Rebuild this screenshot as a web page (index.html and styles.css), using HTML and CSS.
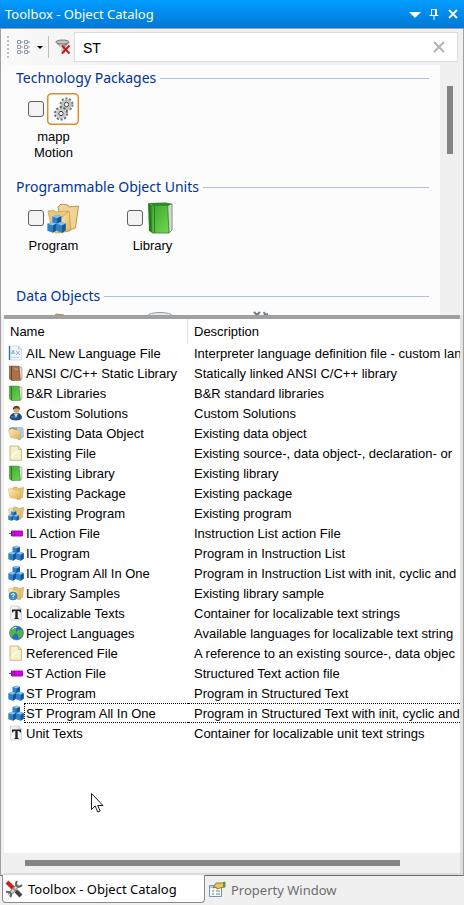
FILE: index.html
```html
<!DOCTYPE html>
<html lang="en">
<head>
<meta charset="utf-8">
<title>Toolbox - Object Catalog</title>
<link rel="stylesheet" href="styles.css">
</head>
<body>
<svg class="defs" aria-hidden="true">
  <defs>
    <linearGradient id="gFolder" x1="0" y1="0" x2="1" y2="1"><stop offset="0" stop-color="#fff0b8"/><stop offset="1" stop-color="#dcae55"/></linearGradient>
    <linearGradient id="gGreen" x1="0" y1="0" x2="1" y2="1"><stop offset="0" stop-color="#3fa52e"/><stop offset="1" stop-color="#6fd850"/></linearGradient>
    <linearGradient id="gFunnel" x1="0" y1="0" x2="1" y2="0"><stop offset="0" stop-color="#444"/><stop offset=".4" stop-color="#ddd"/><stop offset="1" stop-color="#555"/></linearGradient>
    <symbol id="cubes" viewBox="0 0 16 16">
      <path d="M4.500 2L9 .7l3 1.200v5.600L8.500 9l-4-1.300z" fill="#2f80c8"/><path d="M4.500 2L9 .7l3 1.200-3.500 1.600z" fill="#83c2f0"/><path d="M8.500 3.500L12 1.900v5.600L8.500 9z" fill="#17569a"/>
      <path d="M.3 8.200L4 6.700l4 1.200v5.800l-3 2-4.700-1.500z" fill="#2f80c8"/><path d="M.3 8.200L4 6.700l4 1.200-3 1.800z" fill="#83c2f0"/><path d="M5 9.700l3-1.800v5.800l-3 2z" fill="#17569a"/>
      <path d="M8 8.200l3.700-1.500 4 1.200v5.800l-3 2L8 14.200z" fill="#2f80c8"/><path d="M8 8.200l3.700-1.500 4 1.200-3 1.800z" fill="#83c2f0"/><path d="M12.700 9.700l3-1.800v5.800l-3 2z" fill="#17569a"/>
    </symbol>
    <symbol id="folder" viewBox="0 0 16 16">
      <path d="M5 4l1-2 3.500.5 1 1 5-1-1 10-5 2z" fill="#e8c679" stroke="#b98a3a" stroke-width=".5"/>
      <path d="M.5 4L4 3l1 1.500 7.500 1v9L2 12.500z" fill="url(#gFolder)" stroke="#d0a85c" stroke-width=".5"/>
    </symbol>
    <symbol id="folderprog" viewBox="0 0 16 16"><use href="#folder"/><use href="#cubes" x="0" y="5" width="11" height="11"/></symbol>
    <symbol id="samples" viewBox="0 0 16 16"><use href="#folder"/><circle cx="5" cy="11" r="4" fill="#3c8ed2" stroke="#20639f" stroke-width=".6"/><path d="M3.600 10q0-1.500 1.400-1.500t1.400 1.300Q6.400 10.600 5 11.200v.8M5 12.800v1" fill="none" stroke="#fff" stroke-width="1"/></symbol>
    <symbol id="dataobj" viewBox="0 0 16 16"><path d="M1 3q4-2 8 0v3H1z" fill="#8d9aa5"/><path d="M8 2l7 1 .5 9-5 3z" fill="#a9cdf0" stroke="#7f9ab5" stroke-width=".5"/><path d="M.5 5l4-1.500 1 1 7 1v9L2.500 12.500z" fill="url(#gFolder)" stroke="#d0a85c" stroke-width=".5"/></symbol>
    <symbol id="book" viewBox="0 0 16 16"><path d="M11 1.500l3 1v11.500l-2 1.500z" fill="#e7e7e7" stroke="#777" stroke-width=".5"/><path d="M1.500 1l9.500.3 1.200 14L4 15.500l-2.500-1.500z" fill="url(#gGreen)" stroke="#2c8b20" stroke-width=".6"/><path d="M3.500 1.300V15" stroke="#2c7a22"/></symbol>
    <symbol id="brownbook" viewBox="0 0 16 16"><path d="M11 1.500l3 1v11.500l-2 1.500z" fill="#ddd" stroke="#777" stroke-width=".5"/><path d="M1.500 1l9.500.3 1.200 14L4 15.500l-2.500-1.500z" fill="#ae7048" stroke="#754526" stroke-width=".6"/><path d="M3.500 1.300V15" stroke="#704125"/><path d="M6 4l4 .3" stroke="#d5a37e"/></symbol>
    <symbol id="ail" viewBox="0 0 16 16"><path d="M1.500 1h9l3 3v11h-12z" fill="#f0f7fa" stroke="#c9d9e0" stroke-width=".8"/><path d="M1.500 1v14" stroke="#2876ac" stroke-width="1.400"/><path d="M10.500 1v3h3" fill="#d2e6ef" stroke="#a9c3cd" stroke-width=".7"/><path d="M3.500 9l1.500-4 1.500 4M4 8h2M8 6l4 4M11.500 6L8 10" fill="none" stroke="#86a3bd" stroke-width=".9"/><path d="M3 12.500h8" stroke="#c3d6e0"/></symbol>
    <symbol id="person" viewBox="0 0 16 16"><path d="M1.500 13q.5-4 4.500-5h4q4 1 4 5-1 2.500-6 2.500T1.500 13z" fill="#235078"/><path d="M6 8.500l2 4.500 2-4.500z" fill="#cfe2f2"/><path d="M3 12q3-1 5 1" fill="none" stroke="#4f8fc4"/><circle cx="8.500" cy="5" r="3" fill="#dba473"/><path d="M5 5Q4.500.7 9 .8q3.500.3 2.700 4.200Q10.500 3 8.500 3.200T5 5z" fill="#5d4730"/></symbol>
    <symbol id="file" viewBox="0 0 16 16"><path d="M2 1h8.500l3 3.500V15.300H2z" fill="#f7f0c8" stroke="#c4b47f" stroke-width=".9"/><path d="M10.500 1v3.500h3" fill="#e5daa5" stroke="#bca971" stroke-width=".7"/><path d="M4 13q2-7 7-6" fill="none" stroke="#fffbe2" stroke-width="2"/></symbol>
    <symbol id="action" viewBox="0 0 16 16"><path d="M1 8.500h3" stroke="#555"/><path d="M3.500 6h11v5h-11z" fill="#d800e8" stroke="#a010ab" stroke-width="1"/><path d="M6.500 6v5M3.500 6v5" stroke="#76107f"/></symbol>
    <symbol id="textdoc" viewBox="0 0 16 16"><path d="M2.500 1h8l3 3v11h-11z" fill="#f1f2f3" stroke="#cdd0d2" stroke-width=".8"/><path d="M10.500 1v3h3" fill="#ddd" stroke="#bbb" stroke-width=".6"/><path d="M4 4.500h9v3h-.8q-.2-1.600-1.700-1.600h-.8v6.600q0 1 1.300 1v.5H6v-.5q1.300 0 1.300-1V5.900h-.8Q5 5.900 4.800 7.500H4z" fill="#222"/></symbol>
    <symbol id="globe" viewBox="0 0 16 16"><circle cx="8.500" cy="8" r="7" fill="#2a6fbf" stroke="#4d77a0" stroke-width=".6"/><path d="M2.500 5q3-4.500 6.500-3l-1.500 3 1 2-3 3-2 3Q1 9 2.500 5zM10 5l4-.5q2 3 .5 6L11 14l-1-4-2-2z" fill="#55b446"/><path d="M4.500 4q2-2 4-1.500" stroke="#d7f2fb" fill="none"/></symbol>
    <symbol id="bigfolder" viewBox="0 0 32 32"><path d="M11 5l3-3 7 1 1 2 9.500-1-3 22-13 4z" fill="#efd595" stroke="#ad7d35" stroke-width=".8"/><path d="M1 9l5-1 3 2 12-1 2 20-14 2-4-3z" fill="#e9c77d" stroke="#c59a4c" stroke-width=".7"/><path d="M12 18l10-9 2 19-12 3z" fill="url(#gFolder)" stroke="#c59a4c" stroke-width=".8"/></symbol>
  </defs>
</svg>
<div class="window">
  <header class="titlebar">
    <h1>Toolbox - Object Catalog</h1>
    <button type="button" aria-label="Menu"><svg width="12" height="12"><path d="M0 4h12L6 10z" fill="#fff"/></svg></button>
    <button type="button" aria-label="Pin"><svg width="12" height="12"><path d="M3.500 1v6M3 1.500h6M1.500 7.500h9M6 8v4" fill="none" stroke="#fff"/><path d="M7 1h2v6H7z" fill="#fff"/></svg></button>
    <button type="button" aria-label="Close"><svg width="12" height="12"><path d="M2 2l8 8M10 2l-8 8" stroke="#fff" stroke-width="1.800"/></svg></button>
  </header>
  <main class="panel">
    <div class="toolbar">
      <span class="grip"></span>
      <button type="button" class="view" aria-label="View mode"><svg width="28" height="16"><g fill="#f5f7f9" stroke="#8c9dad" stroke-width="1"><path d="M1.500 1.500h3v3h-3zM1.500 6.500h3v3h-3zM1.500 11.500h3v3h-3zM8.500 1.500h3v3h-3zM8.500 6.500h3v3h-3zM8.500 11.500h3v3h-3z"/></g><path d="M5 3h2M5 13h2M12 3h2M12 13h2" stroke="#7193b5"/><path d="M5 8h2M12 8h2" stroke="#e28c83"/><path d="M21 7h6l-3 3z" fill="#000"/></svg></button>
      <span class="divider"></span>
      <button type="button" class="filter" aria-label="Clear filter"><svg width="16" height="16"><path d="M.5 3L6 9v3.500l3.500 2V9l5-6z" fill="url(#gFunnel)"/><ellipse cx="7.500" cy="3" rx="6.500" ry="2" fill="#c4c4c4" stroke="#777"/><path d="M7 6.500l7.500 8M14.500 6.500l-7.500 8" stroke="#c81818" stroke-width="2"/></svg></button>
      <div class="search">
        <input type="text" value="ST" aria-label="Search">
        <button type="button" aria-label="Clear search"><svg width="12" height="12"><path d="M1 1l10 10M11 1L1 11" stroke="#b4b4b4" stroke-width="2"/></svg></button>
      </div>
    </div>
    <div class="catalog">
      <div class="groups">
        <section>
          <h2>Technology Packages</h2>
          <div class="items">
            <label class="item"><span class="pick"><input type="checkbox"><svg width="32" height="32"><rect x=".7" y=".7" width="30.600" height="30.600" rx="4" fill="#fff" stroke="#e58a2b" stroke-width="1.500"/><g fill="none"><circle cx="19.500" cy="11.500" r="5.500" stroke="#777" stroke-width="3" stroke-dasharray="2 1.450"/><circle cx="19.500" cy="11.500" r="4" stroke="#c2c2c2" stroke-width="2.500"/><circle cx="19.500" cy="11.500" r="2.200" stroke="#333" stroke-width="1"/><circle cx="14" cy="20.500" r="5.500" stroke="#666" stroke-width="3" stroke-dasharray="2 1.450"/><circle cx="14" cy="20.500" r="4" stroke="#ccc" stroke-width="2.500"/><circle cx="14" cy="20.500" r="2.200" stroke="#333" stroke-width="1"/></g></svg></span><span class="caption">mapp Motion</span></label>
          </div>
        </section>
        <section>
          <h2>Programmable Object Units</h2>
          <div class="items">
            <label class="item"><span class="pick"><input type="checkbox"><svg width="32" height="32"><use href="#bigfolder" width="32" height="32"/><use href="#cubes" x="0" y="12" width="19" height="19"/></svg></span><span class="caption">Program</span></label>
            <label class="item"><span class="pick"><input type="checkbox"><svg width="32" height="32" viewBox="0 0 32 32"><path d="M20 2l6 0v26l-3 3z" fill="#e9e9e9" stroke="#666" stroke-width=".8"/><path d="M24 4v24M22.500 4v26" stroke="#aaa" stroke-width=".6"/><path d="M2 1l18-.5 6 1.500-4 2-14 0z" fill="#2b8b20"/><path d="M2 1l5 3v27l-4-2z" fill="#257b1b"/><path d="M5 3.500h16.500L23 31H6z" fill="url(#gGreen)" stroke="#2c8b20" stroke-width=".8"/><path d="M8.500 4v27" stroke="#2c8021"/></svg></span><span class="caption">Library</span></label>
          </div>
        </section>
        <section>
          <h2>Data Objects</h2>
          <div class="items">
            <label class="item"><span class="pick"><input type="checkbox" aria-label="Package"><svg width="32" height="32"><path d="M5 10l4-7 8 1 3 3 9-1v20H5z" fill="#dcb465" stroke="#b18542"/></svg></span></label>
            <label class="item"><span class="pick"><input type="checkbox" aria-label="Data object"><svg width="32" height="32"><path d="M2 5v22q12 5 24 0V5" fill="#dce4ea" stroke="#8b98a3"/><ellipse cx="14" cy="4.500" rx="12" ry="3" fill="#e4eaf4" stroke="#8b98a3"/></svg></span></label>
            <label class="item"><span class="pick"><input type="checkbox" aria-label="Configuration"><svg width="32" height="32"><path d="M9 1l3 3 3-3M19 1l1 3 3-1M12 4v24M20 4v24" fill="none" stroke="#6d7c89" stroke-width="2"/></svg></span></label>
          </div>
        </section>
      </div>
      <div class="vscroll"><span></span></div>
    </div>
    <div class="list">
      <table>
        <colgroup><col class="c-icon"><col class="c-name"><col></colgroup>
        <thead><tr><th colspan="2">Name</th><th>Description</th></tr></thead>
        <tbody>
          <tr><td><svg><use href="#ail"/></svg></td><td>AIL New Language File</td><td>Interpreter language definition file - custom lan</td></tr>
          <tr><td><svg><use href="#brownbook"/></svg></td><td>ANSI C/C++ Static Library</td><td>Statically linked ANSI C/C++ library</td></tr>
          <tr><td><svg><use href="#book"/></svg></td><td>B&amp;R Libraries</td><td>B&amp;R standard libraries</td></tr>
          <tr><td><svg><use href="#person"/></svg></td><td>Custom Solutions</td><td>Custom Solutions</td></tr>
          <tr><td><svg><use href="#dataobj"/></svg></td><td>Existing Data Object</td><td>Existing data object</td></tr>
          <tr><td><svg><use href="#file"/></svg></td><td>Existing File</td><td>Existing source-, data object-, declaration- or</td></tr>
          <tr><td><svg><use href="#book"/></svg></td><td>Existing Library</td><td>Existing library</td></tr>
          <tr><td><svg><use href="#folder"/></svg></td><td>Existing Package</td><td>Existing package</td></tr>
          <tr><td><svg><use href="#folderprog"/></svg></td><td>Existing Program</td><td>Existing program</td></tr>
          <tr><td><svg><use href="#action"/></svg></td><td>IL Action File</td><td>Instruction List action File</td></tr>
          <tr><td><svg><use href="#cubes"/></svg></td><td>IL Program</td><td>Program in Instruction List</td></tr>
          <tr><td><svg><use href="#cubes"/></svg></td><td>IL Program All In One</td><td>Program in Instruction List with init, cyclic and e</td></tr>
          <tr><td><svg><use href="#samples"/></svg></td><td>Library Samples</td><td>Existing library sample</td></tr>
          <tr><td><svg><use href="#textdoc"/></svg></td><td>Localizable Texts</td><td>Container for localizable text strings</td></tr>
          <tr><td><svg><use href="#globe"/></svg></td><td>Project Languages</td><td>Available languages for localizable text string</td></tr>
          <tr><td><svg><use href="#file"/></svg></td><td>Referenced File</td><td>A reference to an existing source-, data objec</td></tr>
          <tr><td><svg><use href="#action"/></svg></td><td>ST Action File</td><td>Structured Text action file</td></tr>
          <tr><td><svg><use href="#cubes"/></svg></td><td>ST Program</td><td>Program in Structured Text</td></tr>
          <tr class="focused"><td><svg><use href="#cubes"/></svg></td><td>ST Program All In One</td><td>Program in Structured Text with init, cyclic and</td></tr>
          <tr><td><svg><use href="#textdoc"/></svg></td><td>Unit Texts</td><td>Container for localizable unit text strings</td></tr>
        </tbody>
      </table>
      <svg class="cursor" width="13" height="20" viewBox="0 0 13 20"><path d="M.5.500v16l3.700-3.500 2.500 6 2.500-1-2.500-5.500H12z" fill="#fff" stroke="#1a1a2a"/></svg>
    </div>
    <div class="hscroll"><span></span></div>
  </main>
  <nav class="tabs">
    <button type="button" class="tab active"><svg width="18" height="18"><path d="M13 5L4 15" stroke="#777" stroke-width="4"/><path d="M13 5L4 15" stroke="#ddd" stroke-width="2"/><path d="M12 1q-2 3 0 5t5-1M1 12q3-1 4.500 1T5 17" fill="none" stroke="#666" stroke-width="2"/><path d="M2 2l6 6" stroke="#c3251d" stroke-width="4"/><path d="M8 8l4 4" stroke="#999" stroke-width="2"/><path d="M11 11l5 5" stroke="#444" stroke-width="4"/></svg>Toolbox - Object Catalog</button>
    <button type="button" class="tab"><svg width="18" height="18"><path d="M1.500 4.500h12v11h-12z" fill="#f5f9fd" stroke="#7894b3"/><path d="M2 5h11v2H2z" fill="#b4cce4"/><path d="M4 10h2M4 13h2M8 10h4M8 13h4" stroke="#5b87b5"/><path d="M5 7l3-5h6l3-1v5l-5 1-3 1-1-2z" fill="#ebc94d" stroke="#7c6422" stroke-width=".8"/><path d="M15 1h2v5h-2z" fill="#46a33b"/></svg>Property Window</button>
  </nav>
</div>
</body>
</html>
```

FILE: styles.css
```css
* { box-sizing: border-box; }
body {
  margin: 0;
  background: #f0f0f0;
  color: #000;
  font: 13px/16px "Liberation Sans", Arial, sans-serif;
}
.defs { position: absolute; width: 0; height: 0; }
button {
  margin: 0;
  padding: 0;
  border: 0;
  background: none;
  font: inherit;
  color: inherit;
}
button svg { display: block; }
.window { display: flex; flex-direction: column; min-height: 100vh; }

.titlebar {
  display: flex;
  align-items: center;
  gap: 7px;
  height: 28px;
  padding: 0 5px;
  background: linear-gradient(#009dff, #0078d7);
  color: #fff;
}
.titlebar h1 {
  flex: 1;
  margin: 0;
  font: 13px/20px "Noto Sans", "Open Sans", sans-serif;
}

.panel {
  flex: 1;
  display: flex;
  flex-direction: column;
  border: 1px solid #a0a0a0;
  border-bottom-color: #696969;
  background: #fcfcfc;
}
.toolbar {
  display: flex;
  align-items: center;
  height: 36px;
  padding: 0 5px 0 6px;
  background: linear-gradient(90deg, #fafafa, #f0f0f0 30%);
}
.grip {
  width: 2px;
  height: 22px;
  background: repeating-linear-gradient(#bdbdbd 0 2px, transparent 2px 4px);
}
.view { margin-left: 7px; }
.divider { width: 1px; height: 22px; margin: 0 6px 0 4px; background: #bdbdbd; }
.filter { margin-right: 3px; }
.search {
  flex: 1;
  display: flex;
  align-items: center;
  height: 30px;
  padding: 0 12px 0 8px;
  border: 1px solid #dedede;
  background: #fff;
}
.search input {
  flex: 1;
  min-width: 0;
  padding: 2px 0 0;
  border: 0;
  outline: 0;
  background: none;
  font: 14px/18px "Liberation Sans", Arial, sans-serif;
}

.catalog { display: flex; height: 250px; overflow: hidden; }
.groups {
  flex: 1;
  display: flex;
  flex-direction: column;
  padding: 3px 11px 0 3px;
  overflow: hidden;
}
section { flex: none; height: 109px; }
h2 {
  display: flex;
  align-items: center;
  gap: 4px;
  margin: 0 0 5px 12px;
  color: #003399;
  font: 14px/20px "Noto Sans", "Open Sans", sans-serif;
}
h2::after { content: ""; flex: 1; height: 1px; background: #b0bfdf; }
.items { display: grid; grid-template-columns: repeat(auto-fill, 99px); }
.item { display: flex; flex-direction: column; align-items: center; gap: 4px; text-align: center; }
.pick { display: flex; align-items: center; gap: 3px; }
.pick input {
  appearance: none;
  width: 16px;
  height: 16px;
  margin: 0;
  border: 1px solid #606060;
  border-radius: 3px;
  background: #f3f3f3;
}
.caption { width: 52px; }
.vscroll { width: 23px; padding: 21px 10px 0 7px; background: #f0f0f0; }
.vscroll span { display: block; width: 6px; height: 68px; background: #858585; }

.list {
  position: relative;
  flex: 1;
  border: solid #e3e3e3;
  border-width: 0 3px;
  border-left-color: #f0f0f0;
  background: #fff;
  overflow: hidden;
}
.list::before { content: ""; display: block; height: 4px; background: #a0a0a0; }
table { width: 100%; table-layout: fixed; border-spacing: 0; }
.c-icon { width: 20px; }
.c-name { width: 164px; }
th { height: 24px; padding: 2px 6px 0; text-align: left; font-weight: normal; }
th:first-child { border-right: 1px solid #e0e0e0; }
td { height: 20px; padding: 0; white-space: nowrap; }
td:nth-child(1) { padding-left: 4px; }
td:nth-child(2) { padding: 2px 0 0 2px; }
td:nth-child(3) { padding: 2px 0 0 6px; overflow: hidden; }
td svg { display: block; width: 16px; height: 16px; }
.focused td:nth-child(n+2) { border: 0 dotted #000; border-width: 1px 0; }
.focused td:nth-child(2) { border-left-width: 1px; padding-left: 1px; }
.cursor { position: absolute; left: 87px; top: 478px; }

.hscroll {
  height: 22px;
  padding: 7px 60px 0 21px;
  border: solid #dcdcdc;
  border-width: 0 3px 2px;
  border-left-color: #f0f0f0;
  background: #f0f0f0;
}
.hscroll span { display: block; height: 6px; background: #858585; }

.tabs { display: flex; height: 29px; padding-left: 2px; }
.tab {
  display: flex;
  align-items: center;
  gap: 5px;
  height: 28px;
  padding: 0 3px;
  color: #6d6d6d;
  font: 13px/20px "Noto Sans", "Open Sans", sans-serif;
}
.tab.active {
  width: 203px;
  margin-top: -1px;
  border: solid #8a8a8a;
  border-width: 0 1px 1px;
  border-radius: 0 0 4px 4px;
  padding: 0 2px;
  background: #fff;
  color: #000;
}
```
